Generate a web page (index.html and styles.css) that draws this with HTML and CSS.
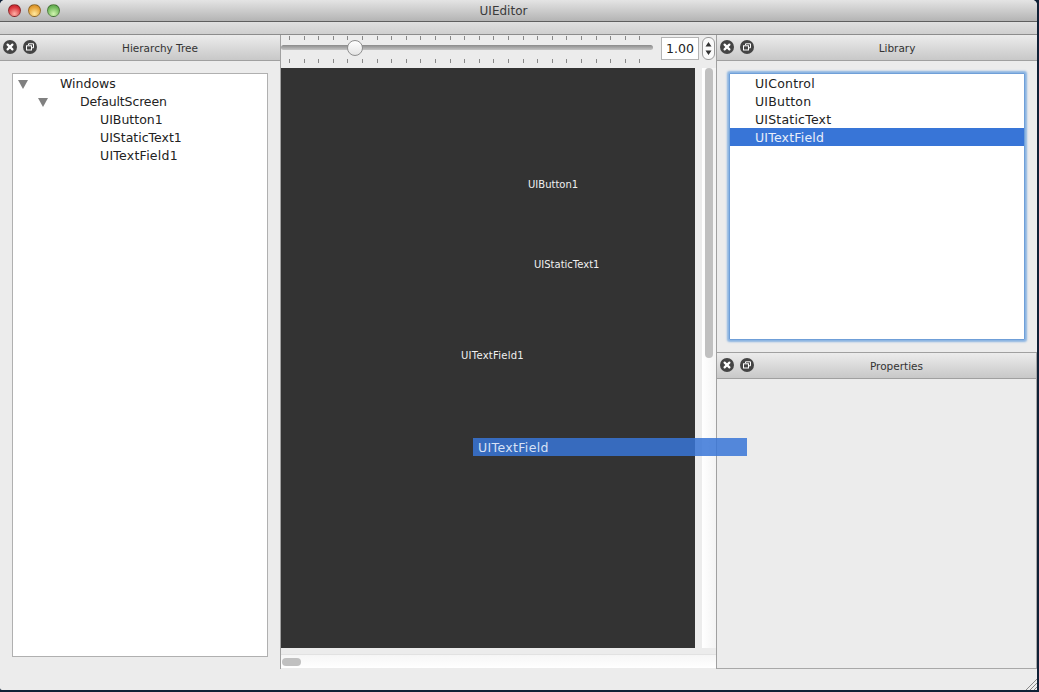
FILE: index.html
```html
<!DOCTYPE html>
<html lang="en">
<head>
    <meta charset="UTF-8">
    <meta name="viewport" content="width=device-width, initial-scale=1.0">
    <title>UIEditor</title>
    <link rel="stylesheet" href="styles.css">
</head>
<body>
    <div class="window">
        <div class="titlebar">
            <div class="lights">
                <span class="light red"></span>
                <span class="light yellow"></span>
                <span class="light green"></span>
            </div>
            <span class="title">UIEditor</span>
        </div>
        <div class="toolbar"></div>

        <div class="main">
            <!-- left dock -->
            <section class="dock left-dock">
                <div class="dock-header">
                    <svg class="dock-btn" viewBox="0 0 14 14"><circle cx="7" cy="7" r="7" fill="#444"/><path d="M4.6 4.6l4.8 4.8M9.4 4.6l-4.8 4.8" stroke="#fff" stroke-width="2.2" stroke-linecap="round"/></svg>
                    <svg class="dock-btn" viewBox="0 0 14 14"><circle cx="7" cy="7" r="7" fill="#444"/><path d="M5.5 5V3.8h5v4H9" fill="none" stroke="#fff"/><rect x="3.5" y="5.8" width="5" height="4.2" fill="none" stroke="#fff"/></svg>
                    <span class="dock-title">Hierarchy Tree</span>
                </div>
                <div class="dock-body tree-wrap">
                    <ul class="tree">
                        <li class="level-0"><span class="arrow"></span>Windows</li>
                        <li class="level-1"><span class="arrow"></span>DefaultScreen</li>
                        <li class="level-2">UIButton1</li>
                        <li class="level-2">UIStaticText1</li>
                        <li class="level-2 wide">UITextField1</li>
                    </ul>
                </div>
            </section>

            <!-- center canvas -->
            <section class="center">
                <div class="zoom-bar">
                    <div class="slider">
                        <div class="ticks"></div>
                        <div class="track"><span class="knob"></span></div>
                        <div class="ticks"></div>
                    </div>
                    <div class="zoom-value">1.00</div>
                    <div class="stepper">
                        <svg viewBox="0 0 13 23" width="13" height="23"><path d="M6.5 5l-3 4.5h6zM6.5 18l-3-4.5h6z" fill="#333"/></svg>
                    </div>
                </div>
                <div class="canvas-row">
                    <div class="canvas">
                        <span class="node node-button">UIButton1</span>
                        <span class="node node-static">UIStaticText1</span>
                        <span class="node node-field">UITextField1</span>
                    </div>
                    <div class="vscroll"><span class="vthumb"></span></div>
                </div>
                <div class="hscroll"><span class="hthumb"></span></div>
            </section>

            <!-- right docks -->
            <section class="right-col">
                <div class="dock library">
                    <div class="dock-header">
                        <svg class="dock-btn" viewBox="0 0 14 14"><circle cx="7" cy="7" r="7" fill="#444"/><path d="M4.6 4.6l4.8 4.8M9.4 4.6l-4.8 4.8" stroke="#fff" stroke-width="2.2" stroke-linecap="round"/></svg>
                        <svg class="dock-btn" viewBox="0 0 14 14"><circle cx="7" cy="7" r="7" fill="#444"/><path d="M5.5 5V3.8h5v4H9" fill="none" stroke="#fff"/><rect x="3.5" y="5.8" width="5" height="4.2" fill="none" stroke="#fff"/></svg>
                        <span class="dock-title">Library</span>
                    </div>
                    <div class="dock-body library-wrap">
                        <ul class="list">
                            <li>UIControl</li>
                            <li>UIButton</li>
                            <li>UIStaticText</li>
                            <li class="selected">UITextField</li>
                        </ul>
                    </div>
                </div>
                <div class="dock properties">
                    <div class="dock-header">
                        <svg class="dock-btn" viewBox="0 0 14 14"><circle cx="7" cy="7" r="7" fill="#444"/><path d="M4.6 4.6l4.8 4.8M9.4 4.6l-4.8 4.8" stroke="#fff" stroke-width="2.2" stroke-linecap="round"/></svg>
                        <svg class="dock-btn" viewBox="0 0 14 14"><circle cx="7" cy="7" r="7" fill="#444"/><path d="M5.5 5V3.8h5v4H9" fill="none" stroke="#fff"/><rect x="3.5" y="5.8" width="5" height="4.2" fill="none" stroke="#fff"/></svg>
                        <span class="dock-title">Properties</span>
                    </div>
                    <div class="dock-body"></div>
                </div>
            </section>
        </div>

        <div class="statusbar">
            <svg class="grip" viewBox="0 0 12 12" width="12" height="12"><path d="M1 12L12 1M5 12l7-7M9 12l3-3" stroke="#888" fill="none"/></svg>
        </div>

        <!-- item being dragged from the library -->
        <div class="drag-item">UITextField</div>
    </div>
</body>
</html>
```

FILE: styles.css
```css
html, body {
    margin: 0;
    padding: 0;
    height: 100%;
    overflow: hidden;
}
body {
    background-color: #0f2036;
    font-family: "DejaVu Sans", sans-serif;
    font-size: 12.5px;
    color: #222;
}
ul {
    list-style: none;
    margin: 0;
    padding: 0;
}

.window {
    position: relative;
    width: 1037px;
    height: 690px;
    display: flex;
    flex-direction: column;
    background-color: #ececec;
    border-radius: 5px 5px 0 2px;
    overflow: hidden;
}

/* title bar */
.titlebar {
    flex: 0 0 22px;
    box-sizing: border-box;
    position: relative;
    display: flex;
    align-items: center;
    justify-content: center;
    padding-right: 30px;
    background: linear-gradient(#e4e4e4, #b4b4b4);
    border-bottom: 1px solid #5f5f5f;
}
.title {
    font-size: 12px;
    color: #3a3a3a;
}
.lights {
    position: absolute;
    left: 8px;
    top: 4px;
    display: flex;
    gap: 6.5px;
}
.light {
    width: 13px;
    height: 13px;
    border-radius: 50%;
    box-sizing: border-box;
    border: 1px solid rgba(0, 0, 0, 0.35);
}
.red {
    background: radial-gradient(circle at 50% 80%, #ffb0a6, #d8343a 65%, #b82028);
}
.yellow {
    background: radial-gradient(circle at 50% 80%, #ffe9a0, #e5a033 65%, #c88420);
}
.green {
    background: radial-gradient(circle at 50% 80%, #d2f5b0, #70b85a 65%, #4f9a3e);
}
.toolbar {
    flex: 0 0 13px;
    box-sizing: border-box;
    background: linear-gradient(#e0e0e0, #cfcfcf);
    border-bottom: 1px solid #8c8c8c;
}

/* layout */
.main {
    flex: 0 0 634px;
    display: grid;
    grid-template-columns: 280px 436px 321px;
}
.statusbar {
    flex: 1;
    position: relative;
}
.grip {
    position: absolute;
    right: 0;
    bottom: 0;
}

/* docks */
.dock {
    display: flex;
    flex-direction: column;
}
.dock-header {
    flex: 0 0 26px;
    box-sizing: border-box;
    position: relative;
    display: flex;
    align-items: center;
    gap: 6px;
    padding: 0 0 2px 3px;
    background: linear-gradient(#ececec, #c8c8c8);
    border-bottom: 1px solid #a0a0a0;
}
.dock-btn {
    width: 14px;
    height: 14px;
}
.dock-title {
    position: absolute;
    left: 40px;
    right: 0;
    top: 7px;
    text-align: center;
    font-size: 10.5px;
    color: #333;
}
.dock-body {
    flex: 1;
    min-height: 0;
}
.tree-wrap {
    display: flex;
    padding: 12px 12px 12px 12px;
}
.tree {
    flex: 1;
    background-color: #fff;
    border: 1px solid #b0b0b0;
    padding-top: 1px;
}
.tree li {
    position: relative;
    height: 18px;
    line-height: 18px;
    white-space: nowrap;
}
.level-0 {
    padding-left: 47px;
}
.level-1 {
    padding-left: 67px;
    letter-spacing: -0.15px;
}
.level-2 {
    padding-left: 87px;
}
.wide {
    letter-spacing: 0.25px;
}
.arrow {
    position: absolute;
    top: 5px;
    width: 0;
    height: 0;
    border-left: 5px solid transparent;
    border-right: 5px solid transparent;
    border-top: 9px solid #808080;
}
.level-0 .arrow {
    left: 5px;
}
.level-1 .arrow {
    left: 25px;
}

/* center */
.center {
    display: flex;
    flex-direction: column;
    border-left: 1px solid #a0a0a0;
}
.zoom-bar {
    flex: 0 0 33px;
    display: flex;
    background-color: #ececec;
}
.slider {
    width: 372px;
    display: flex;
    flex-direction: column;
}
.ticks {
    height: 4px;
    margin: 1px 0 0 8px;
    background: repeating-linear-gradient(90deg, #888 0, #888 1px, transparent 1px, transparent 14.6px);
}
.track {
    position: relative;
    height: 5px;
    margin: 5px 0 8px 0;
    border-radius: 3px;
    background: linear-gradient(#8a8a8a, #c4c4c4);
}
.knob {
    position: absolute;
    left: 66px;
    top: -5px;
    width: 16px;
    height: 16px;
    box-sizing: border-box;
    border-radius: 50%;
    border: 1px solid #8f8f8f;
    background: linear-gradient(#fff, #e4e4e4);
}
.zoom-value {
    box-sizing: border-box;
    width: 38px;
    height: 23px;
    margin: 2px 0 0 8px;
    border: 1px solid #b4b4b4;
    background-color: #fff;
    text-align: center;
    line-height: 22px;
    font-size: 12.5px;
}
.stepper {
    box-sizing: border-box;
    width: 13px;
    height: 23px;
    margin: 2px 0 0 3px;
    border: 1px solid #9a9a9a;
    border-radius: 6px;
    background-color: #fafafa;
    overflow: hidden;
}
.stepper svg {
    display: block;
    margin: -1px;
}
.canvas-row {
    flex: 0 0 580px;
    display: flex;
}
.canvas {
    position: relative;
    width: 414px;
    margin-right: 7px;
    background-color: #333;
}
.node {
    position: absolute;
    font-size: 10px;
    color: #f0f0f0;
    white-space: nowrap;
}
.node-button {
    left: 247px;
    top: 111px;
}
.node-static {
    left: 253px;
    top: 191px;
}
.node-field {
    left: 180px;
    top: 282px;
    letter-spacing: 0.25px;
}
.vscroll {
    flex: 1;
    padding-left: 3px;
    background: linear-gradient(90deg, #fff, #f4f4f4);
}
.vthumb {
    display: block;
    width: 8px;
    height: 290px;
    border-radius: 4px;
    background-color: #c0c0c0;
}
.hscroll {
    flex: 0 0 14px;
    box-sizing: border-box;
    margin-top: 6px;
    padding: 3px 0 0 1px;
    border-top: 1px solid #e2e2e2;
    background: linear-gradient(#f6f6f6, #fff);
}
.hthumb {
    display: block;
    width: 19px;
    height: 8px;
    border-radius: 4px;
    background-color: #c0c0c0;
}

/* right column */
.right-col {
    display: flex;
    flex-direction: column;
    box-sizing: border-box;
    border-left: 1px solid #a0a0a0;
}
.library {
    flex: 0 0 318px;
    border-bottom: 1px solid #a0a0a0;
    box-sizing: border-box;
}
.library-wrap {
    padding: 12px 12px 12px 12px;
    display: flex;
}
.list {
    flex: 1;
    background-color: #fff;
    border: 1px solid #6f9fd8;
    box-shadow: 0 0 2px 2px #8ab4e2;
    border-radius: 1px;
}
.list li {
    height: 18px;
    line-height: 20px;
    padding-left: 25px;
    letter-spacing: 0.2px;
}
.list .selected {
    background-color: #3875d7;
    color: #e8eefa;
}
.properties {
    flex: 1;
    border-right: 1px solid #a8a8a8;
    border-bottom: 1px solid #a8a8a8;
}

/* drag ghost */
.drag-item {
    position: absolute;
    left: 473px;
    top: 438px;
    width: 269px;
    height: 18px;
    line-height: 19px;
    padding-left: 5px;
    letter-spacing: 0.35px;
    background-color: rgba(56, 117, 215, 0.85);
    color: #d8e2f5;
}
```
